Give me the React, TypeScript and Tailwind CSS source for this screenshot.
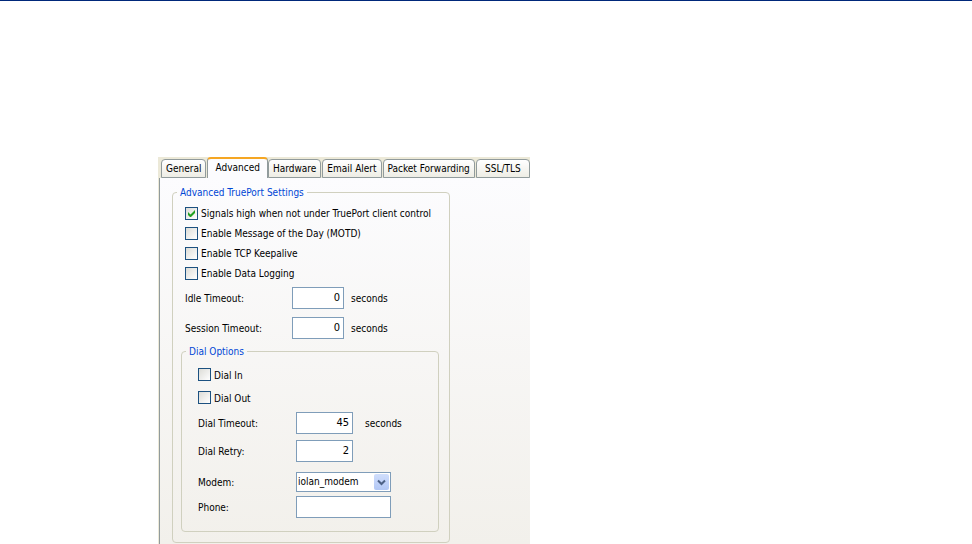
import React, { useState } from 'react';

const TABS = ['General', 'Advanced', 'Hardware', 'Email Alert', 'Packet Forwarding', 'SSL/TLS'];

interface CheckProps {
  label: string;
  defaultChecked?: boolean;
}

const Check: React.FC<CheckProps> = ({ label, defaultChecked }) => {
  const [checked, setChecked] = useState(!!defaultChecked);

  return (
    <label className="flex items-center gap-[3px] whitespace-nowrap">
      <span className="grid">
        <input
          type="checkbox"
          checked={checked}
          onChange={(e) => setChecked(e.target.checked)}
          className="col-start-1 row-start-1 w-[13px] h-[13px] appearance-none border border-[#1c5180] bg-linear-to-br from-[#dcdcd7] to-white"
        />
        {checked && (
          <svg className="col-start-1 row-start-1 w-[13px] h-[13px] pointer-events-none" viewBox="0 0 13 13">
            <path d="M3 5v3l2 2h1l4-4V3L5.500 7.500z" fill="#21a121" />
          </svg>
        )}
      </span>
      <span className="pt-0.5">{label}</span>
    </label>
  );
};

interface NumberFieldProps {
  id: string;
  value: string;
  className: string;
}

const NumberField: React.FC<NumberFieldProps> = ({ id, value, className }) => (
  <input
    id={id}
    type="text"
    defaultValue={value}
    className={`h-[22px] border border-[#7f9db9] bg-white pr-[3px] pb-0.5 text-right text-[11px] outline-none ${className}`}
  />
);

const App: React.FC = () => {
  const [activeTab, setActiveTab] = useState('Advanced');

  return (
    <div className="h-screen overflow-hidden flex flex-col bg-white border-t border-[#00287a] pt-[156px] pl-[158px] font-['DejaVu_Sans_Condensed','DejaVu_Sans',sans-serif] text-[10px] leading-4 text-black">
      <div className="flex-1 w-full max-w-[372px] flex flex-col bg-[#ece9d8]">
        <div role="tablist" className="h-[21px] flex items-end pl-[3px] whitespace-nowrap">
          {TABS.map((tab) => (
            <button
              key={tab}
              role="tab"
              aria-selected={activeTab === tab}
              onClick={() => setActiveTab(tab)}
              className={
                activeTab === tab
                  ? 'h-[21px] px-[7px] pb-0.5 border-x border-t-2 border-x-[#919b9c] border-t-[#f5a623] rounded-t-sm bg-[#fcfcfe]'
                  : 'h-[19px] px-1 pt-px mr-px last:mr-0 last:grow border border-[#919b9c] rounded-t-sm bg-linear-to-b from-white to-[#eeede5]'
              }
            >
              {tab}
            </button>
          ))}
        </div>

        <div className="flex-1 ml-px pt-[6px] pl-3 pr-20 border-l border-[#919b9c] bg-linear-to-b from-[#fcfcfe] to-[#f2f0eb]">
          <fieldset className="min-w-0 border border-[#d0d0bf] rounded-sm pb-[10px]">
            <legend className="ml-1 px-[3px] pt-0.5 leading-[14px] text-[#0046d5]">Advanced TruePort Settings</legend>

            <div className="px-3 pt-[3px]">
              <div className="grid auto-rows-[20px]">
                <Check label="Signals high when not under TruePort client control" defaultChecked />
                <Check label="Enable Message of the Day (MOTD)" />
                <Check label="Enable TCP Keepalive" />
                <Check label="Enable Data Logging" />
              </div>
              <div className="grid grid-cols-[107px_52px_auto] auto-rows-[30px] items-center [&>label]:pt-0.5 [&>span]:pt-0.5">
                <label htmlFor="idle">Idle Timeout:</label>
                <NumberField id="idle" value="0" className="w-[52px]" />
                <span className="pl-[7px]">seconds</span>
                <label htmlFor="session">Session Timeout:</label>
                <NumberField id="session" value="0" className="w-[52px]" />
                <span className="pl-[7px]">seconds</span>
              </div>
            </div>

            <fieldset className="min-w-0 ml-2 mr-[10px] border border-[#d0d0bf] rounded-sm px-4 pb-3">
              <legend className="-ml-3 px-[3px] pt-0.5 leading-[14px] text-[#0046d5]">Dial Options</legend>

              <div className="grid auto-rows-[23px] pt-1">
                <Check label="Dial In" />
                <Check label="Dial Out" />
              </div>

              <div className="grid grid-cols-[98px_auto_1fr] auto-rows-[28px] items-center [&>label]:pt-0.5 [&>span]:pt-0.5">
                <label htmlFor="dial-timeout">Dial Timeout:</label>
                <NumberField id="dial-timeout" value="45" className="w-[57px]" />
                <span className="pl-3">seconds</span>
                <label htmlFor="dial-retry">Dial Retry:</label>
                <NumberField id="dial-retry" value="2" className="w-[57px]" />
              </div>

              <div className="grid grid-cols-[98px_95px] auto-rows-[25px] items-center pt-1 [&>label]:pt-0.5">
                <label htmlFor="modem">Modem:</label>
                <div className="grid items-center">
                  <select
                    id="modem"
                    className="col-start-1 row-start-1 w-full h-5 appearance-none border border-[#7f9db9] bg-white pl-px outline-none"
                  >
                    <option>iolan_modem</option>
                  </select>
                  <svg
                    className="col-start-1 row-start-1 justify-self-end mr-[2px] w-[15px] h-4 rounded-xs bg-linear-to-b from-[#d0defc] to-[#b2c7f5] pointer-events-none"
                    viewBox="0 0 15 16"
                  >
                    <path d="M4 6.500l3.500 3.500L11 6.500" fill="none" stroke="#4d6185" strokeWidth="2" />
                  </svg>
                </div>
                <label htmlFor="phone">Phone:</label>
                <input
                  id="phone"
                  type="text"
                  className="w-full h-[22px] border border-[#7f9db9] bg-white px-1 outline-none"
                />
              </div>
            </fieldset>
          </fieldset>
        </div>
      </div>
    </div>
  );
};

export default App;
